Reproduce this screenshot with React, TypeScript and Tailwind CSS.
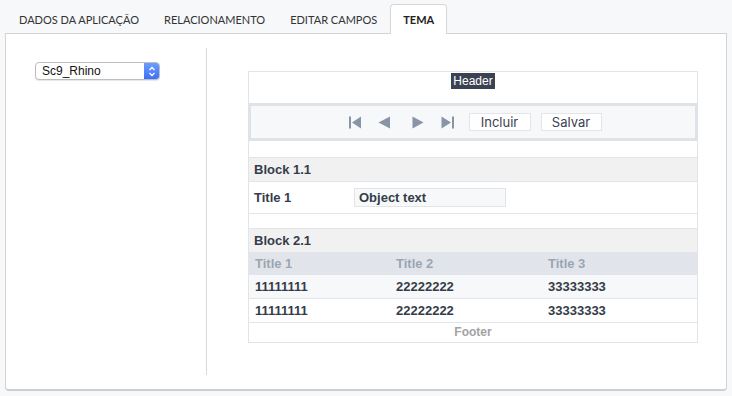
import React from "react";

const tabs = [
  { label: "DADOS DA APLICAÇÃO", active: false },
  { label: "RELACIONAMENTO", active: false },
  { label: "EDITAR CAMPOS", active: false },
  { label: "TEMA", active: true },
];

const ic = "#8994a7";

function FirstIcon() {
  return (
    <svg width="13" height="13" viewBox="0 0 13 13">
      <rect x="0" y="0.5" width="2" height="12" fill={ic} />
      <polygon points="12,0.5 12,12.5 3,6.5" fill={ic} />
    </svg>
  );
}
function PrevIcon() {
  return (
    <svg width="13" height="13" viewBox="0 0 13 13">
      <polygon points="12,0.5 12,12.5 0.5,6.5" fill={ic} />
    </svg>
  );
}
function NextIcon() {
  return (
    <svg width="12" height="13" viewBox="0 0 12 13">
      <polygon points="0.5,0.5 0.5,12.5 11.5,6.5" fill={ic} />
    </svg>
  );
}
function LastIcon() {
  return (
    <svg width="13" height="13" viewBox="0 0 13 13">
      <polygon points="0.5,0.5 0.5,12.5 10,6.5" fill={ic} />
      <rect x="11" y="0.5" width="2" height="12" fill={ic} />
    </svg>
  );
}

export default function App() {
  return (
    <div
      className="w-[732px] h-[396px] bg-[#f7f8fa] px-[5px] pt-[4px] overflow-hidden"
      style={{ fontFamily: "Lato, 'Liberation Sans', sans-serif" }}
    >
      <div className="flex h-[29px] pl-[2px]">
        {tabs.map((t) =>
          t.active ? (
            <div
              key={t.label}
              className="relative z-10 h-[30px] px-[12px] pt-[8px] bg-white border border-b-0 border-[#d6d6d6] rounded-t-[4px] text-[11px] leading-[14px] font-bold text-[#222]"
            >
              {t.label}
            </div>
          ) : (
            <div
              key={t.label}
              className="h-[29px] pl-[12px] pr-[13px] pt-[9px] text-[11px] leading-[14px] text-[#333]"
            >
              {t.label}
            </div>
          )
        )}
      </div>
      <div className="h-[358px] bg-white border border-[#d3d3d3] border-b-2 border-b-[#cfcfcf] rounded-b-[4px] flex py-[14px]">
        <div className="w-[201px] border-r border-[#d9d9d9]">
          <div
            className="mt-[14px] ml-[29px] w-[125px] h-[18px] flex bg-white border border-[#bdbdbd] rounded-[4px] shadow-[0_1px_1px_rgba(0,0,0,0.1)] overflow-hidden"
            style={{ fontFamily: "'Liberation Sans', Arial, sans-serif" }}
          >
            <div className="flex-1 pl-[6px] text-[12px] leading-[16px] text-[#111]">Sc9_Rhino</div>
            <div className="w-[15px] h-full bg-gradient-to-b from-[#6d9dff] to-[#3d6ef6] flex items-center justify-center">
              <svg width="8" height="11" viewBox="0 0 8 11">
                <polyline points="1.5,4 4,1.5 6.5,4" fill="none" stroke="white" strokeWidth="1.3" />
                <polyline points="1.5,7 4,9.5 6.5,7" fill="none" stroke="white" strokeWidth="1.3" />
              </svg>
            </div>
          </div>
        </div>
        <div className="pl-[41px] pt-[23px]">
          <div
            className="w-[450px] border border-[#e1e5ea]"
            style={{ fontFamily: "'Liberation Sans', Arial, sans-serif" }}
          >
            <div className="h-[31px] flex justify-center pt-[1px]">
              <span className="h-[16px] px-[2px] bg-[#3b4352] text-white text-[12px] leading-[16px]">
                Header
              </span>
            </div>
            <div className="-mx-px h-[38px] border-[3px] border-[#dfe3e8] bg-[#f7f8fa] flex items-center justify-center pl-[4px]">
              <FirstIcon />
              <div className="w-[16px]" />
              <PrevIcon />
              <div className="w-[21px]" />
              <NextIcon />
              <div className="w-[17px]" />
              <LastIcon />
              <div className="w-[15px]" />
              <div
                className="w-[62px] h-[18px] bg-white border border-[#e2e6ea] text-[13px] leading-[16px] text-[#3b4250] text-center"
                style={{ fontFamily: "Inter, 'Liberation Sans', sans-serif" }}
              >
                Incluir
              </div>
              <div className="w-[10px]" />
              <div
                className="w-[61px] h-[18px] bg-white border border-[#e2e6ea] text-[13px] leading-[16px] text-[#3b4250] text-center"
                style={{ fontFamily: "Inter, 'Liberation Sans', sans-serif" }}
              >
                Salvar
              </div>
            </div>
            <div className="h-[16px]" />
            <div className="h-[25px] bg-[#f1f1f1] border-y border-[#e1e5ea] pl-[5px] text-[13px] font-bold leading-[23px] text-[#353c48]">
              Block 1.1
            </div>
            <div className="h-[32px] border-b border-[#e1e5ea] flex items-center pl-[5px] text-[13px] font-bold text-[#353c48]">
              <div className="w-[100px]">Title 1</div>
              <div className="w-[152px] h-[19px] bg-[#f7f8fa] border border-[#e1e5ea] pl-[4px] leading-[17px]">
                Object text
              </div>
            </div>
            <div className="h-[14px]" />
            <div className="h-[24px] bg-[#f1f1f1] border-t border-[#e1e5ea] pl-[5px] text-[13px] font-bold leading-[23px] text-[#353c48]">
              Block 2.1
            </div>
            <div className="h-[23px] bg-[#e1e5eb] grid grid-cols-[141px_152px_1fr] items-center text-[13px] font-bold text-[#9ca5b2]">
              <div className="pl-[6px]">Title 1</div>
              <div className="pl-[6px]">Title 2</div>
              <div className="pl-[6px]">Title 3</div>
            </div>
            <div className="h-[24px] bg-[#f7f8fa] border-b border-[#e1e5ea] grid grid-cols-[141px_152px_1fr] items-center text-[13px] font-bold text-[#353c48]">
              <div className="pl-[6px]">11111111</div>
              <div className="pl-[6px]">22222222</div>
              <div className="pl-[6px]">33333333</div>
            </div>
            <div className="h-[24px] bg-white border-b border-[#e1e5ea] grid grid-cols-[141px_152px_1fr] items-center text-[13px] font-bold text-[#353c48]">
              <div className="pl-[6px]">11111111</div>
              <div className="pl-[6px]">22222222</div>
              <div className="pl-[6px]">33333333</div>
            </div>
            <div className="h-[19px] text-center text-[12px] font-bold leading-[18px] text-[#a3a3a3]">
              Footer
            </div>
          </div>
        </div>
      </div>
    </div>
  );
}
